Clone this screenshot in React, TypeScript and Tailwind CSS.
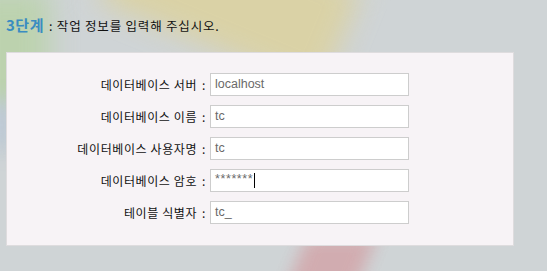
import React from 'react';

const fields = [
  { label: '데이터베이스 서버', value: 'localhost' },
  { label: '데이터베이스 이름', value: 'tc' },
  { label: '데이터베이스 사용자명', value: 'tc' },
  { label: '데이터베이스 암호', value: '*******', caret: true },
  { label: '테이블 식별자', value: 'tc_' },
];

const App = () => {
  return (
    <div className="relative w-[547px] h-[271px] overflow-hidden bg-[#cfd4d6] font-['Noto_Sans_CJK_KR',sans-serif]">
      {/* 배경 장식 */}
      <div className="absolute -left-[30px] -top-[10px] w-[80px] h-[140px] bg-[#bcd2ae] blur-[14px]" />
      <div className="absolute -left-[20px] top-[100px] w-[40px] h-[50px] bg-[#bfcad6] blur-[10px]" />
      <div className="absolute left-[110px] -top-[60px] w-[240px] h-[110px] bg-[#dad2a6] blur-[14px] rotate-[22deg]" />
      <div className="absolute left-[295px] top-[236px] w-[70px] h-[60px] bg-[#d2a8ac] blur-[9px] skew-x-[-22deg] opacity-90" />

      <div className="relative px-[6px] pt-[14px]">
        <div className="flex items-baseline h-[22px] leading-[22px]">
          <span className="text-[15px] font-bold text-[#3a8cc1] tracking-[0.5px]">3단계</span>
          <span className="ml-[5px] text-[12.5px] text-[#111] tracking-[0.8px]">: 작업 정보를 입력해 주십시오.</span>
        </div>

        <div className="mt-[16px] w-[508px] h-[194px] border border-[#dedcde] bg-[#f7f3f6] pt-[20px]">
          <div className="flex flex-col gap-[9px]">
            {fields.map((f) => (
              <div key={f.label} className="flex items-center h-[23px]">
                <div className="w-[199px] text-right text-[12px] text-[#111] tracking-[0.6px]">
                  {f.label}<span className="ml-[5px]">:</span>
                </div>
                <div className="ml-[4px] w-[199px] h-[23px] border border-[#cdcdcd] bg-white flex items-center pl-[4px] text-[12.5px] text-[#6a6a6a] font-['Liberation_Sans',sans-serif]">
                  <span className={f.caret ? 'tracking-[0.6px] -mt-[3px]' : ''}>{f.value}</span>
                  {f.caret && <span className="ml-[1px] w-[1px] h-[15px] bg-black" />}
                </div>
              </div>
            ))}
          </div>
        </div>
      </div>
    </div>
  );
};

export default App;
